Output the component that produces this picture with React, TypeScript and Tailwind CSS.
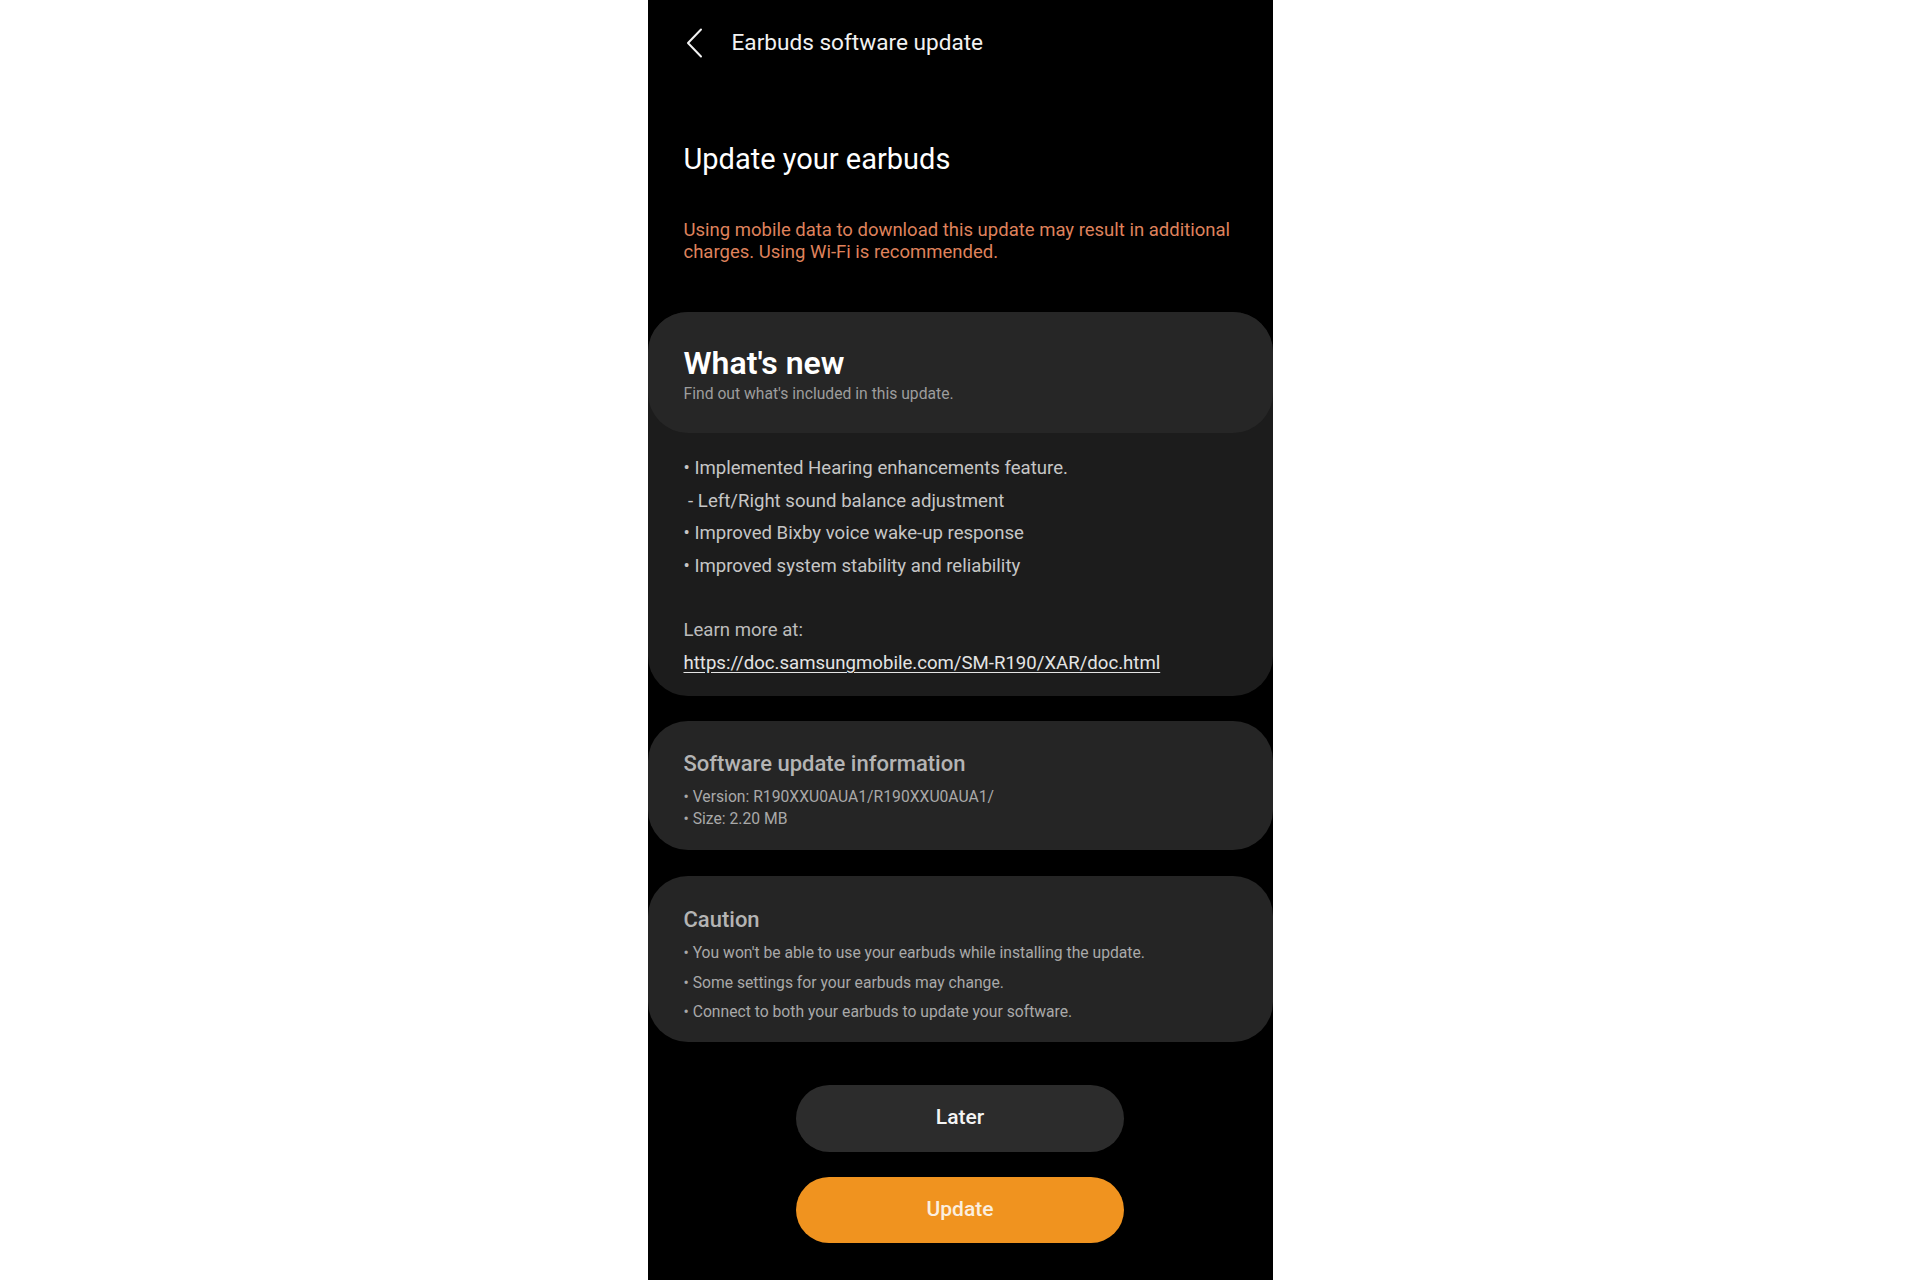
export default function App() {
  const whatsNew = [
    '• Implemented Hearing enhancements feature.',
    '\u00a0- Left/Right sound balance adjustment',
    '• Improved Bixby voice wake-up response',
    '• Improved system stability and reliability',
  ];

  const caution = [
    "• You won't be able to use your earbuds while installing the update.",
    '• Some settings for your earbuds may change.',
    '• Connect to both your earbuds to update your software.',
  ];

  return (
    <div className="min-h-screen w-full bg-white" style={{ fontFamily: 'Roboto, "Noto Sans", sans-serif' }}>
      <div className="mx-auto flex h-[1280px] w-[625px] flex-col overflow-hidden bg-black">
        {/* top bar */}
        <div className="flex h-[86px] items-center pl-[38px]">
          <svg width="17" height="30" viewBox="0 0 17 30" fill="none">
            <polyline points="15,1.5 2,15 15,28.5" stroke="#f2f2f2" strokeWidth="2" strokeLinecap="round" strokeLinejoin="round" />
          </svg>
          <span className="ml-[29px] text-[22.6px] text-[#f2f2f2]">Earbuds software update</span>
        </div>

        <div className="px-[36px]">
          <h1 className="mt-[55px] text-[29px] leading-[36px] text-white">Update your earbuds</h1>
          <p className="mt-[42px] text-[18.5px] leading-[22px] text-[#df825c]">
            Using mobile data to download this update may result in additional charges. Using Wi-Fi is recommended.
          </p>
        </div>

        {/* what's new */}
        <div className="mt-[49px] rounded-[40px] bg-[#1c1c1c]">
          <div className="rounded-[40px] bg-[#262626] px-[36px] pb-[29px] pt-[33px]">
            <div className="text-[32px] font-semibold leading-[36px] text-white">What's new</div>
            <div className="mt-[3px] text-[15.7px] leading-[20px] text-[#9d9d9d]">Find out what's included in this update.</div>
          </div>
          <div className="px-[36px] pb-[16px] pt-[19px]">
            {whatsNew.map((line) => (
              <div key={line} className="text-[18.6px] leading-[32.5px] text-[#c6c6c6]">
                {line}
              </div>
            ))}
            <div className="mt-[32px] text-[18.6px] leading-[33px] text-[#bcbcbc]">Learn more at:</div>
            <div className="text-[18.6px] leading-[33px] text-[#e4e4e4] underline underline-offset-[3px]">
              https://doc.samsungmobile.com/SM-R190/XAR/doc.html
            </div>
          </div>
        </div>

        {/* software info */}
        <div className="mt-[25px] rounded-[40px] bg-[#252525] px-[36px] pb-[20px] pt-[29px]">
          <div className="text-[22px] font-medium leading-[28px] text-[#b4b4b4]">Software update information</div>
          <div className="mt-[8px] text-[15.7px] leading-[22px] text-[#a9a9a9]">
            <div>• Version: R190XXU0AUA1/R190XXU0AUA1/</div>
            <div>• Size: 2.20 MB</div>
          </div>
        </div>

        {/* caution */}
        <div className="mt-[26px] rounded-[40px] bg-[#252525] px-[36px] pb-[15px] pt-[30px]">
          <div className="text-[22px] font-medium leading-[28px] text-[#b4b4b4]">Caution</div>
          <div className="mt-[4px] text-[15.7px] leading-[29.5px] text-[#a9a9a9]">
            {caution.map((line) => (
              <div key={line}>{line}</div>
            ))}
          </div>
        </div>

        {/* buttons */}
        <div className="mt-[43px] flex flex-col items-center gap-[25px]">
          <button className="h-[67px] w-[328px] rounded-full bg-[#2c2c2c] text-[21px] font-medium text-[#f4f4f4]">
            Later
          </button>
          <button className="h-[66px] w-[328px] rounded-full bg-[#f0931f] text-[21px] font-medium text-[#fbefe0]">
            Update
          </button>
        </div>
      </div>
    </div>
  );
}
